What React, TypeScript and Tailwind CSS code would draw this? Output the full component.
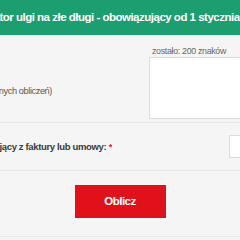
import React from 'react';

export default function App() {
  return (
    <div className="w-[240px] h-[240px] overflow-hidden bg-[#f5f5f5] text-[#555] font-['Liberation_Sans',Arial,sans-serif]">
      {/* header bar */}
      <div className="h-[35px] bg-[#1d9e70] flex items-center overflow-hidden">
        <div className="-ml-[38px] whitespace-nowrap text-white font-bold text-[11.5px] tracking-[-0.5px]">
          Kalkulator ulgi na złe długi - obowiązujący od 1 stycznia 2019
        </div>
      </div>
      <div className="h-[2px] bg-[#eef6f3]" />

      {/* opis row */}
      <div className="flex items-start h-[86px] border-b border-[#e6e6e6]">
        <div className="w-[52px] shrink-0 flex justify-end overflow-hidden mt-[49px]">
          <span className="whitespace-nowrap shrink-0 text-[9.2px] tracking-[-0.4px] leading-[10px] text-[#555]">
            Opis (do własnych obliczeń)
          </span>
        </div>
        <div className="ml-[97px] pt-[9px] flex flex-col">
          <span className="text-[8.8px] tracking-[-0.3px] text-[#666] ml-[3px] leading-[10px] whitespace-nowrap">zostało: 200 znaków</span>
          <div className="mt-[1px] w-[120px] h-[62px] bg-white border border-[#dcdcdc]" />
        </div>
      </div>

      {/* kwota row */}
      <div className="flex items-center h-[48px] border-b border-[#e6e6e6]">
        <div className="w-[112px] shrink-0 flex justify-end overflow-hidden">
          <span className="whitespace-nowrap shrink-0 text-[9.5px] tracking-[-0.35px] leading-[10px] font-bold text-[#3a3a3a]">
            Kwota VAT wynikający z faktury lub umowy: <span className="text-[#e2243b]">*</span>
          </span>
        </div>
        <div className="ml-[117px] w-[40px] h-[23px] bg-white border border-[#dcdcdc] shrink-0" />
      </div>

      {/* button row */}
      <div className="flex justify-center pt-[14px] h-[66px] border-b border-[#e8e8e8]">
        <button className="w-[91px] h-[33px] bg-[#e0111b] text-white font-bold text-[11.5px] tracking-[-0.5px]">
          Oblicz
        </button>
      </div>
    </div>
  );
}
